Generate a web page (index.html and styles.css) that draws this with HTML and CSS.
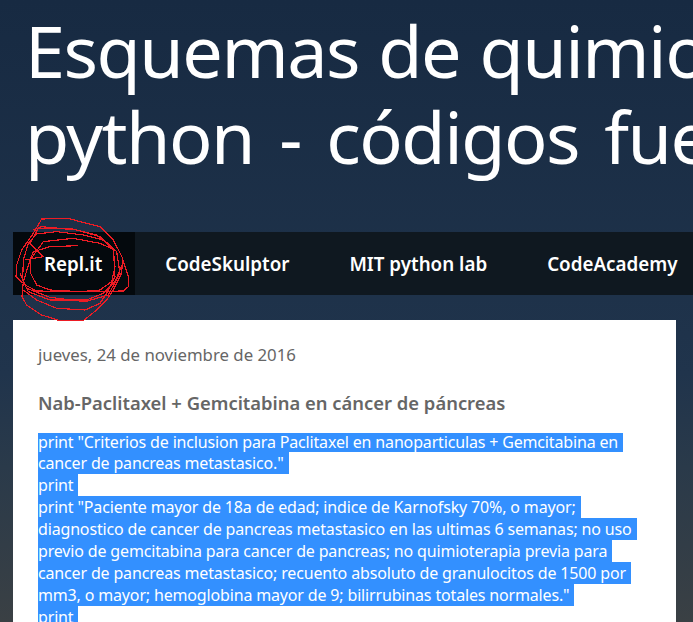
FILE: index.html
```html
<!DOCTYPE html>
<html lang="es">
<head>
  <meta charset="UTF-8">
  <title>Esquemas de quimio python</title>
  <link rel="stylesheet" href="styles.css">
</head>
<body>
  <header class="blog-header">
    <h1 class="blog-title">
      <span class="title-line">Esquemas de quimio</span>
      <span class="title-line title-line-wide">python - códigos fue</span>
    </h1>
  </header>

  <nav class="tabs">
    <a class="tab tab-active">Repl.it</a>
    <a class="tab">CodeSkulptor</a>
    <a class="tab">MIT python lab</a>
    <a class="tab">CodeAcademy</a>
  </nav>

  <main class="card">
    <div class="post-date">jueves, 24 de noviembre de 2016</div>
    <h3 class="post-title">Nab-Paclitaxel + Gemcitabina en cáncer de páncreas</h3>
    <div class="post-body">
      <span class="sel">print "Criterios de inclusion para Paclitaxel en nanoparticulas + Gemcitabina en</span>
      <span class="sel">cancer de pancreas metastasico."</span>
      <span class="sel">print</span>
      <span class="sel">print "Paciente mayor de 18a de edad; indice de Karnofsky 70%, o mayor;</span>
      <span class="sel">diagnostico de cancer de pancreas metastasico en las ultimas 6 semanas; no uso</span>
      <span class="sel">previo de gemcitabina para cancer de pancreas; no quimioterapia previa para</span>
      <span class="sel">cancer de pancreas metastasico; recuento absoluto de granulocitos de 1500 por</span>
      <span class="sel">mm3, o mayor; hemoglobina mayor de 9; bilirrubinas totales normales."</span>
      <span class="sel">print</span>
    </div>
  </main>

  <!-- red pen scribble around the first tab -->
  <svg class="scribble" viewBox="0 0 450 360" width="150" height="120">
    <polyline points="235,107 150,110 100,125 90,150 92,190 110,225 150,240 240,245 300,240 335,215 345,170 340,120 310,90 250,75 170,65 110,72 85,100 70,150 68,210 85,245 150,270 260,270 310,250 345,215 370,155 385,200 385,230 370,243 250,245 110,243 75,225 48,200 50,165 65,120 100,70 125,27 205,25 240,35 300,50 340,90 368,145 365,190 340,240 320,270 290,300 250,332 180,332 125,315 80,285 66,260 70,215 90,150 130,95 220,85 300,100 345,120"/>
    <polyline points="100,60 125,50 230,60 300,80 340,115 345,200 320,250 300,280 255,300 170,295 110,270 70,240"/>
    <polyline points="75,150 130,140 90,100 115,55 210,55 290,75 350,125 360,190 325,255 255,275 150,262 80,235 60,190"/>
  </svg>
</body>
</html>
```

FILE: styles.css
```css
html, body {
  margin: 0;
  height: 622px;
  overflow: hidden;
}

body {
  position: relative;
  font-family: "Noto Sans", sans-serif;
  background: linear-gradient(180deg, #172a42 0%, #20344c 60%, #2a3a4a 75%, #3a4044 100%);
}

.blog-header {
  height: 232px;
  padding: 7px 0 0 25px;
  box-sizing: border-box;
  overflow: hidden;
}

.blog-title {
  margin: 0;
  font-size: 72px;
  line-height: 86px;
  font-weight: 400;
  letter-spacing: -1.5px;
  color: #fff;
  white-space: nowrap;
}

.title-line {
  display: block;
  word-spacing: 2px;
}

.title-line-wide {
  word-spacing: 8px;
}

.tabs {
  display: flex;
  margin-left: 13px;
  height: 63px;
  background: #0f1820;
}

.tab {
  padding: 1px 30px 0;
  line-height: 62px;
  font-size: 18.8px;
  font-weight: 600;
  color: #fff;
  white-space: nowrap;
}

.tab-active {
  padding: 1px 33px 0 31px;
  background: #04090d;
}

.card {
  margin: 25px 17px 0 13px;
  padding: 24px 25px 0;
  height: 302px;
  box-sizing: border-box;
  background: #fff;
  overflow: hidden;
}

.post-date {
  font-size: 16.8px;
  line-height: 22px;
  color: #666;
}

.post-title {
  margin: 26px 0 19px;
  font-size: 18.4px;
  line-height: 22px;
  font-weight: 600;
  color: #666;
}

.sel {
  display: block;
  width: fit-content;
  padding: 1px 5px 0 0;
  font-size: 16px;
  line-height: 21px;
  letter-spacing: -0.16px;
  white-space: nowrap;
  color: #fff;
  background: #3390ff;
}

.sel:first-child {
  padding-bottom: 2px;
  line-height: 16px;
}

.scribble {
  position: absolute;
  left: 0;
  top: 210px;
  fill: none;
  stroke: #ed1c24;
  stroke-width: 3.5;
  shape-rendering: crispEdges;
}
```
